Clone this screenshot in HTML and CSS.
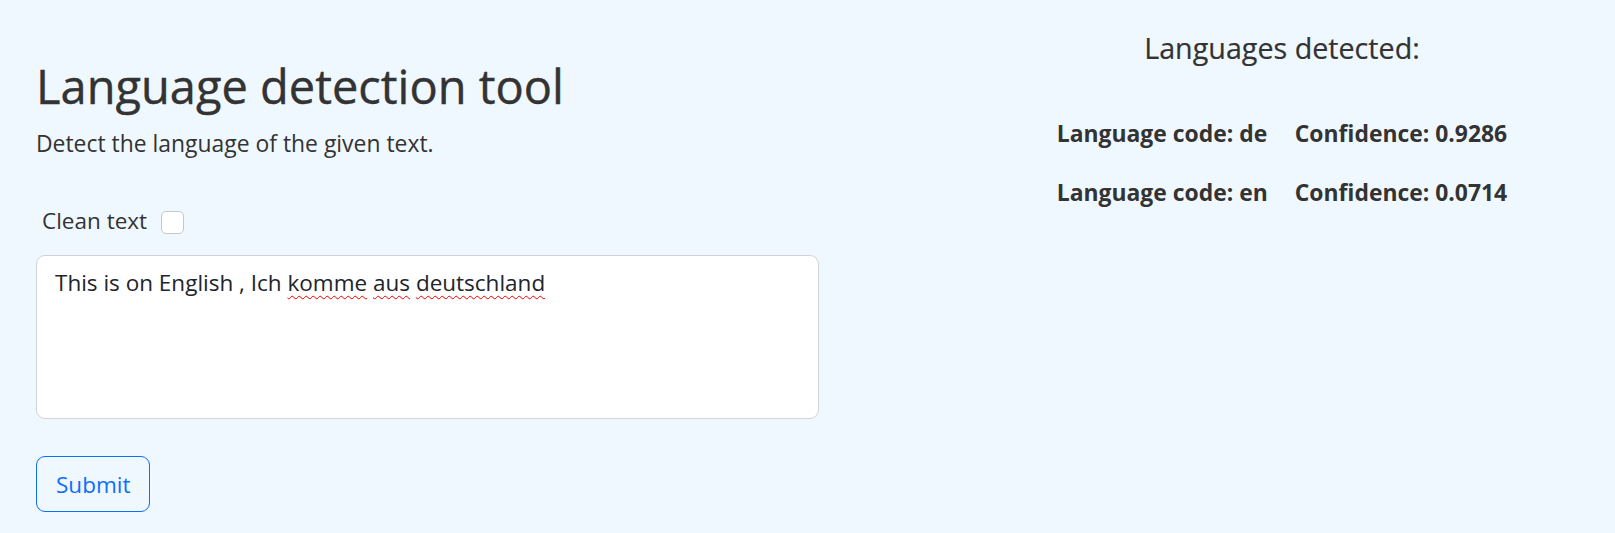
FILE: index.html
```html
<!DOCTYPE html>
<html lang="en">
<head>
<meta charset="utf-8">
<title>Language detection tool</title>
<link rel="stylesheet" href="styles.css">
</head>
<body>
<div class="page">
  <main class="tool">
    <h1 class="title">Language detection tool</h1>
    <p class="lead">Detect the language of the given text.</p>
    <div class="check-row">
      <label class="check-label" for="clean">Clean text</label>
      <span class="checkbox" id="clean"></span>
    </div>
    <div class="text-input">This is on English , Ich <span class="misspelled">komme</span> <span class="misspelled">aus</span> <span class="misspelled">deutschland</span></div>
    <button class="btn-submit" type="button">Submit</button>
  </main>
  <aside class="results">
    <h5 class="results-title">Languages detected:</h5>
    <div class="results-grid">
      <div class="cell">Language code: de</div>
      <div class="cell">Confidence: 0.9286</div>
      <div class="cell">Language code: en</div>
      <div class="cell">Confidence: 0.0714</div>
    </div>
  </aside>
</div>
</body>
</html>
```
FILE: styles.css
```css
* { box-sizing: border-box; }
html, body { margin: 0; padding: 0; }
body {
  background: #f0f8ff;
  color: #333;
  font-family: "Open Sans", "Noto Sans", sans-serif;
  font-size: 22.5px;
  line-height: 36px;
}
.page {
  display: grid;
  grid-template-columns: 783px 1fr;
  column-gap: 130px;
  padding-left: 36px;
}
.tool { display: flex; flex-direction: column; align-items: flex-start; }
.title {
  margin: 58px 0 0;
  font-size: 47px;
  line-height: 56px;
  font-weight: 500;
  color: #333;
  -webkit-text-stroke: 0.4px #333;
}
.lead { margin: 12px 0 0; font-size: 22.9px; }
.check-row {
  display: flex;
  align-items: center;
  gap: 14px;
  margin-top: 41px;
  padding-left: 6px;
}
.checkbox {
  width: 23px;
  height: 23px;
  border: 1.5px solid #c4c8cd;
  border-radius: 5px;
  background: #fff;
  margin-top: 3px;
}
.text-input {
  margin-top: 16px;
  width: 783px;
  height: 164px;
  background: #fff;
  border: 1.5px solid #ced4da;
  border-radius: 9px;
  padding: 9px 18px;
  color: #212529;
}
.misspelled {
  text-decoration: underline wavy #e00;
  text-decoration-thickness: 1px;
  text-underline-offset: 4px;
}
.btn-submit {
  margin-top: 37px;
  font: inherit;
  line-height: 35px;
  color: #0d6efd;
  background: transparent;
  border: 1.5px solid #0d6efd;
  border-radius: 9px;
  padding: 9.5px 19px;
}
.results { display: flex; flex-direction: column; align-items: center; }
.results-title {
  margin: 31px 0 0;
  font-size: 28.7px;
  line-height: 34px;
  font-weight: 500;
  -webkit-text-stroke: 0.2px #333;
}
.results-grid {
  margin-top: 51px;
  display: grid;
  grid-template-columns: auto auto;
  column-gap: 27px;
  row-gap: 23px;
}
.cell { font-weight: 700; font-size: 22.9px; line-height: 36px; }
```
